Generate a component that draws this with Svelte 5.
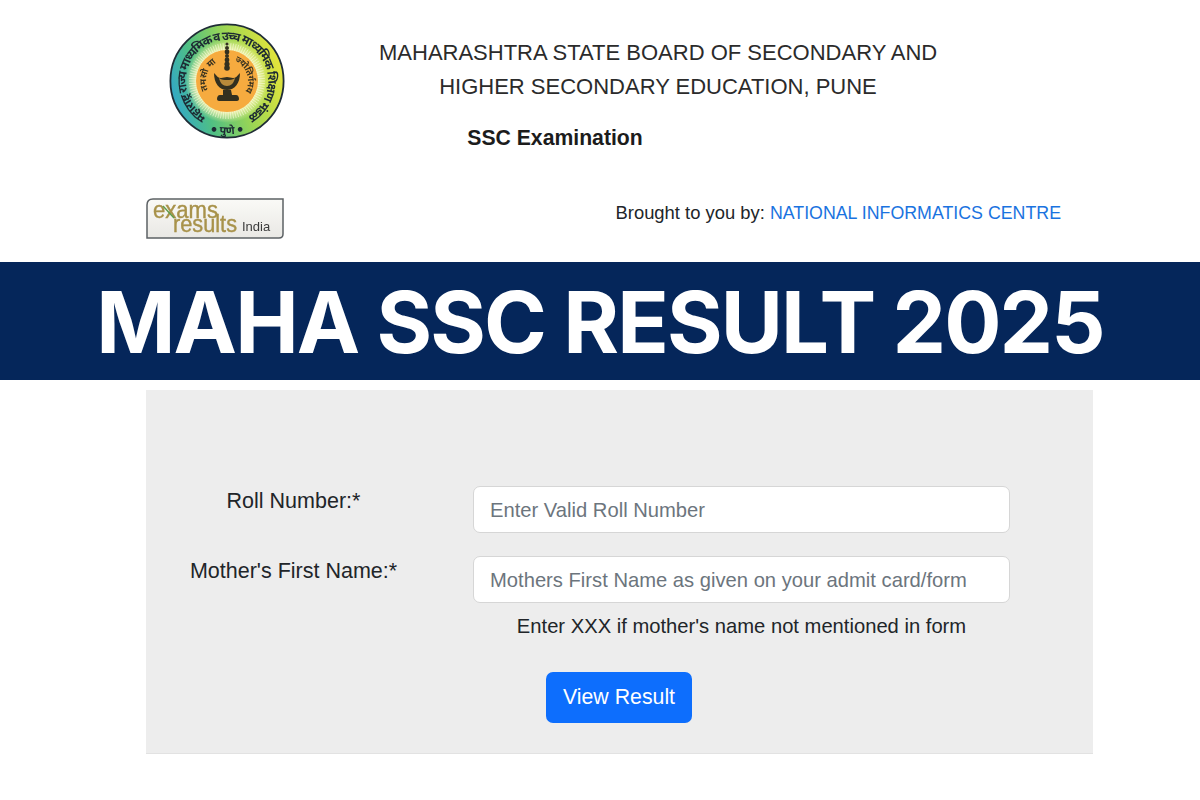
<script lang="ts">
    let rollNumber = "";
    let motherName = "";

    // rays round the orange disc of the seal
    const rays = Array.from({ length: 90 }, (_, i) => (i * Math.PI * 2) / 90);
    // beads of the lamp stem: y, radius
    const beads = [[21, 1.6], [25, 2], [29, 2.4], [33, 2], [37, 2.4], [41, 2.6], [45, 2.8]];
</script>

<div class="page">
    <header class="top">
        <div class="boardRow">
            <svg class="seal" width="116" height="116" viewBox="0 0 116 116" role="img" aria-label="Board seal">
                <defs>
                    <linearGradient id="ring" x1="0" y1="0.7" x2="1" y2="0.4">
                        <stop offset="0" stop-color="#2fa6cf" />
                        <stop offset="0.28" stop-color="#4fbf84" />
                        <stop offset="0.62" stop-color="#9cd653" />
                        <stop offset="1" stop-color="#e6e53a" />
                    </linearGradient>
                    <radialGradient id="halo">
                        <stop offset="0.72" stop-color="#f7f4b8" />
                        <stop offset="1" stop-color="#e8f2a8" stop-opacity="0" />
                    </radialGradient>
                    <path id="legendArc" d="M37.5 93.5A41 41 0 1 1 78.5 93.5" />
                    <path id="cityArc" d="M24 99A53 53 0 0 0 92 99" />
                    <path id="mottoLeft" d="M39 66.9A21 21 0 0 1 49.1 39" />
                    <path id="mottoRight" d="M65.2 38.3A21 21 0 0 1 76.2 68.5" />
                </defs>
                <circle cx="58" cy="58" r="56.6" fill="url(#ring)" stroke="#1f2d36" stroke-width="1.8" />
                <circle cx="58" cy="58" r="42" fill="url(#halo)" />
                {#each rays as a}
                    <line
                        x1={58 + Math.cos(a) * 29}
                        y1={58 + Math.sin(a) * 29}
                        x2={58 + Math.cos(a) * 38}
                        y2={58 + Math.sin(a) * 38}
                        stroke="#fdfbe0"
                        stroke-width="0.6"
                    />
                {/each}
                <circle cx="58" cy="58" r="31" fill="#f6ab3f" />
                <text class="sealText">
                    <textPath href="#legendArc" textLength="214" lengthAdjust="spacing">महाराष्ट्र राज्य माध्यमिक व उच्च माध्यमिक शिक्षण मंडळ</textPath>
                </text>
                <text class="sealCity">
                    <textPath href="#cityArc" startOffset="50%" text-anchor="middle">● पुणे ●</textPath>
                </text>
                <text class="sealMotto">
                    <textPath href="#mottoLeft" textLength="31">तमसो मा</textPath>
                </text>
                <text class="sealMotto">
                    <textPath href="#mottoRight" textLength="36">ज्योतिर्गमय</textPath>
                </text>
                {#each beads as b}
                    <circle cx="58" cy={b[0]} r={b[1]} fill="#33301f" />
                {/each}
                <path d="M45 50c0 10 5 17 13 17s13-7 13-17c-3 3-4 5-7 5-2 0-4-1-6-1s-4 1-6 1c-3 0-4-2-7-5z" fill="#33301f" />
                <path d="M50 55c1 5 4 8 8 8s7-3 8-8c-3 2-5 2-8 2s-5 0-8-2z" fill="#b88a3a" />
                <path d="M54 67h8l1 5h4c2 0 3 2 3 4 0 1-1 2-2 2H50c-1 0-2-1-2-2 0-2 1-4 3-4h3z" fill="#33301f" />
            </svg>
            <div class="boardText">
                <div class="boardName">MAHARASHTRA STATE BOARD OF SECONDARY AND</div>
                <div class="boardName">HIGHER SECONDARY EDUCATION, PUNE</div>
                <div class="exam">SSC Examination</div>
            </div>
        </div>
        <div class="creditRow">
            <svg class="examsLogo" width="138" height="41" viewBox="0 0 138 41" role="img" aria-label="Exams Results India">
                <defs>
                    <linearGradient id="plate" x1="0" y1="0" x2="0" y2="1">
                        <stop offset="0" stop-color="#fafaf7" />
                        <stop offset="1" stop-color="#e9e8e4" />
                    </linearGradient>
                </defs>
                <path d="M7 1H137V36q0 4-4 4H1V7q0-6 6-6z" fill="url(#plate)" stroke="#5c6164" stroke-width="1.5" />
                <text x="7" y="20" class="logoWord" textLength="65" lengthAdjust="spacingAndGlyphs">exams</text>
                <text x="27" y="34" class="logoWord" textLength="64" lengthAdjust="spacingAndGlyphs">results</text>
                <text x="96" y="33" class="logoIndia">India</text>
                <line x1="17" y1="8" x2="28" y2="20" stroke="#5e9c4a" stroke-width="1.4" />
            </svg>
            <div class="credit">Brought to you by: <span class="nic">NATIONAL INFORMATICS CENTRE</span></div>
        </div>
    </header>

    <div class="banner">MAHA SSC RESULT 2025</div>

    <form class="panel" on:submit|preventDefault>
        <div class="field">
            <label for="roll">Roll Number:*</label>
            <input id="roll" type="text" placeholder="Enter Valid Roll Number" bind:value={rollNumber} />
        </div>
        <div class="field second">
            <label for="mother">Mother's First Name:*</label>
            <input id="mother" type="text" placeholder="Mothers First Name as given on your admit card/form" bind:value={motherName} />
        </div>
        <p class="hint">Enter XXX if mother's name not mentioned in form</p>
        <button class="submit" type="submit">View Result</button>
    </form>
</div>

<style>
    :global(body) {
        background: #fff;
    }
    .page {
        width: 1200px;
        height: 800px;
        overflow: hidden;
        font-family: "Liberation Sans", Arial, sans-serif;
        color: #212529;
    }
    .top {
        height: 262px;
        padding: 23px 139px 0 146px;
        box-sizing: border-box;
    }
    .boardRow {
        display: flex;
    }
    .seal {
        margin-left: 23px;
        flex: none;
        filter: blur(0.45px);
    }
    .sealText, .sealCity, .sealMotto {
        font-family: "Noto Sans", sans-serif;
        font-weight: 700;
        fill: #1d2a33;
    }
    .sealText {
        font-size: 12px;
    }
    .sealCity {
        font-size: 11px;
    }
    .sealMotto {
        font-size: 9px;
        fill: #3a3320;
    }
    .boardText {
        width: 558px;
        margin-left: 94px;
        padding-top: 13px;
        text-align: center;
    }
    .boardName {
        font-size: 22px;
        line-height: 34px;
        color: #2b2b2b;
        white-space: nowrap;
    }
    .exam {
        margin-top: 17px;
        padding-right: 206px;
        font-size: 21.2px;
        line-height: 34px;
        font-weight: 700;
        color: #1c1c1c;
        white-space: nowrap;
    }
    .creditRow {
        display: flex;
        align-items: flex-start;
        justify-content: space-between;
        margin-top: 43px;
    }
    .examsLogo {
        display: block;
        filter: blur(0.4px);
    }
    .logoWord {
        font-family: "Liberation Sans", Arial, sans-serif;
        font-size: 23px;
        fill: #a8924a;
        stroke: #a8924a;
        stroke-width: 0.4;
    }
    .logoIndia {
        font-family: "Liberation Sans", Arial, sans-serif;
        font-size: 13px;
        fill: #3b3b3b;
    }
    .credit {
        margin-top: 3px;
        font-size: 18.4px;
        line-height: 24px;
        white-space: nowrap;
    }
    .nic {
        font-size: 17.8px;
        color: #1a73e0;
    }
    .banner {
        height: 118px;
        padding-top: 2px;
        box-sizing: border-box;
        background: #05265a;
        color: #fff;
        display: flex;
        align-items: center;
        justify-content: center;
        font-family: Inter, sans-serif;
        font-weight: 700;
        font-size: 85px;
        letter-spacing: -1.9px;
        white-space: nowrap;
    }
    .panel {
        width: 947px;
        height: 364px;
        margin: 10px 0 0 146px;
        padding-top: 96px;
        box-sizing: border-box;
        background: #ededed;
        border-bottom: 1px solid #e2e2e2;
    }
    .field {
        display: flex;
        align-items: flex-start;
    }
    .field.second {
        margin-top: 23px;
    }
    label {
        width: 295px;
        padding-top: 2px;
        text-align: center;
        font-size: 21.5px;
        line-height: 26px;
        color: #212529;
    }
    input {
        width: 537px;
        height: 47px;
        margin-left: 32px;
        padding: 2px 16px 0;
        box-sizing: border-box;
        border: 1.5px solid #d6d6d6;
        border-radius: 7px;
        background: #fff;
        font-family: inherit;
        font-size: 20.2px;
        outline: none;
    }
    input::placeholder {
        color: #6c757d;
        opacity: 1;
    }
    .hint {
        width: 537px;
        margin: 11px 0 0 327px;
        text-align: center;
        font-size: 20.2px;
        line-height: 24px;
        color: #212529;
    }
    .submit {
        display: block;
        width: 146px;
        height: 51px;
        margin: 34px 0 0 400px;
        border: 0;
        border-radius: 7px;
        background: #0d6efd;
        color: #fff;
        font-family: inherit;
        font-size: 21.3px;
    }
</style>
